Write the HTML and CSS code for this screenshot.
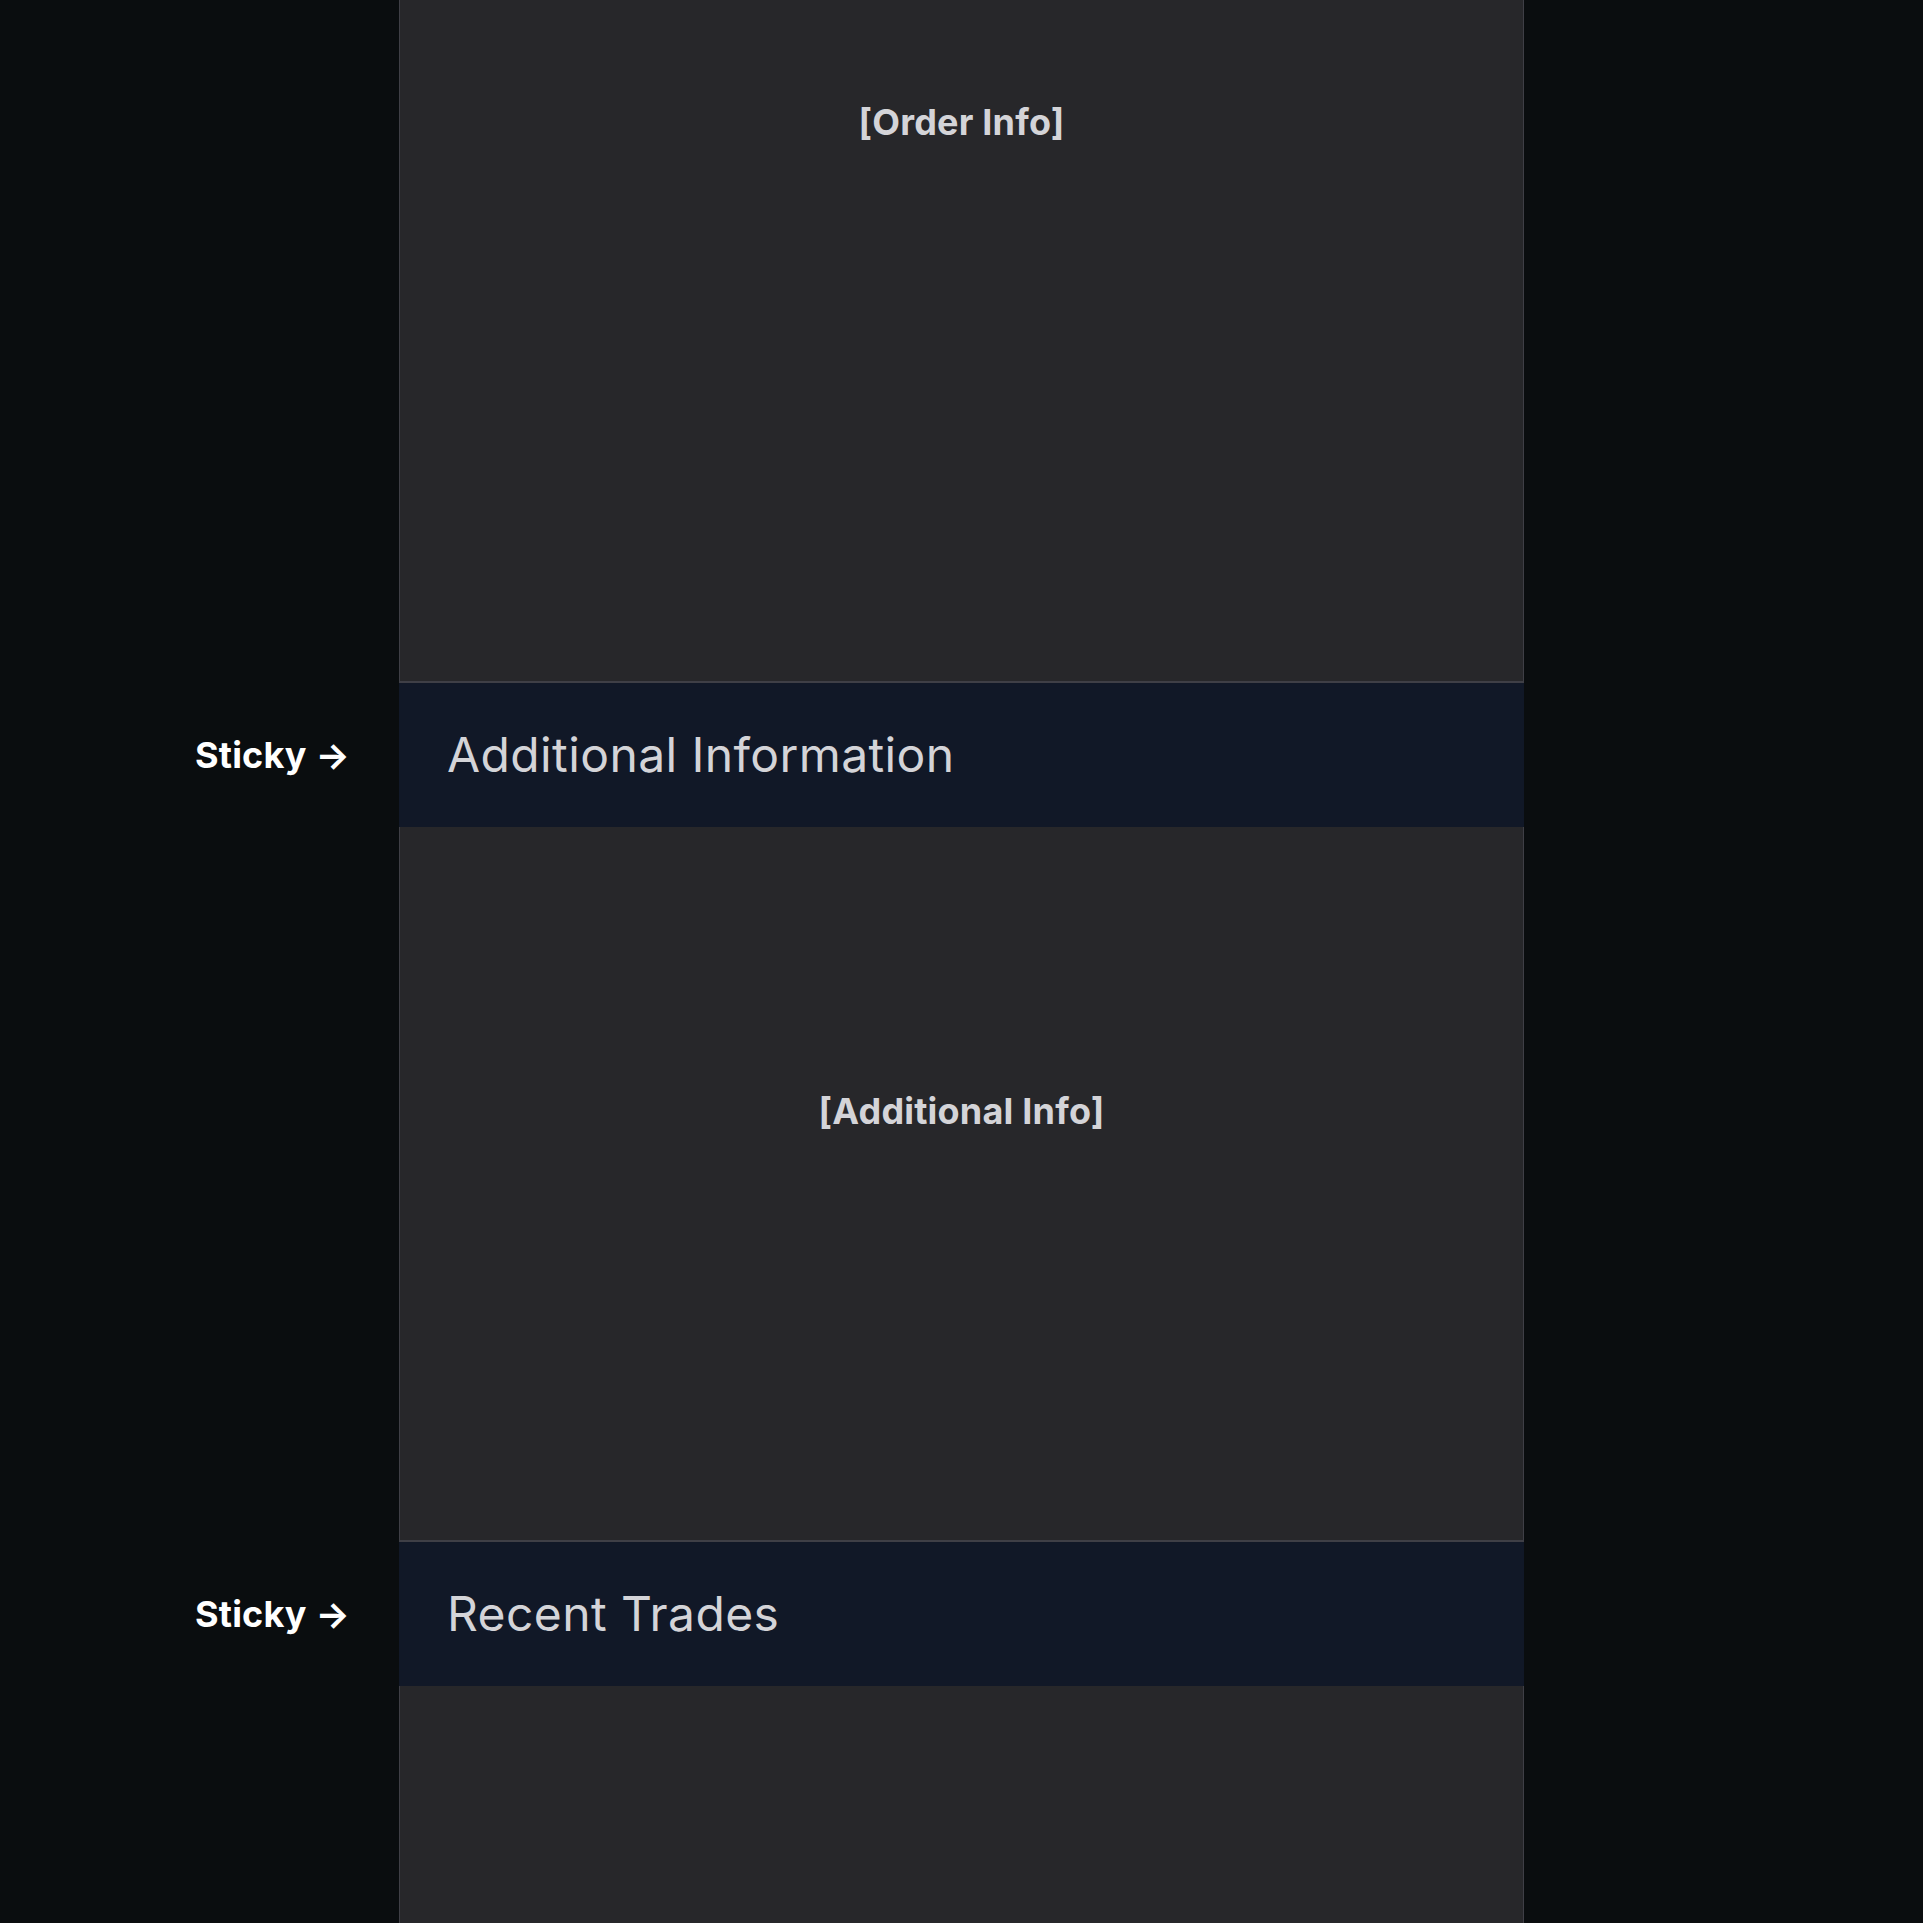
FILE: index.html
```html
<!DOCTYPE html>
<html lang="en">

<head>
    <meta charset="UTF-8">
    <meta name="viewport" content="width=device-width, initial-scale=1.0">
    <title>Sticky Sections</title>
    <link rel="stylesheet" href="styles.css">
</head>

<body>

    <div class="page">
        <div class="panel panel-first">
            <div class="placeholder">[Order Info]</div>
        </div>

        <div class="section-header">
            <span class="sticky-label">Sticky &rarr;</span>
            <h2>Additional Information</h2>
        </div>

        <div class="panel panel-middle">
            <div class="placeholder">[Additional Info]</div>
        </div>

        <div class="section-header">
            <span class="sticky-label">Sticky &rarr;</span>
            <h2>Recent Trades</h2>
        </div>

        <div class="panel panel-last"></div>
    </div>

</body>

</html>
```

FILE: styles.css
```css
body {
    font-family: 'Inter', 'Noto Sans', sans-serif;
    background-color: #0a0d0f;
    margin: 0;
    padding: 0;
    overflow: hidden;
}

.page {
    width: 1125px;
    margin: 0 auto;
}

.panel {
    background-color: #27272a;
    border: 1px solid #3f3f46;
    border-top: none;
    border-bottom-width: 2px;
    box-sizing: border-box;
}

.panel-first {
    height: 683px;
    padding-top: 102px;
}

.panel-middle {
    height: 715px;
    padding-top: 264px;
}

.panel-last {
    height: 400px;
    border-bottom: none;
}

.placeholder {
    text-align: center;
    font-size: 36px;
    line-height: 40px;
    font-weight: 700;
    letter-spacing: 0.2px;
    color: #d4d4d8;
}

.section-header {
    position: sticky;
    top: 0;
    background-color: #111827;
    padding: 48px;
}

.section-header h2 {
    margin: 0;
    font-size: 48px;
    line-height: 1;
    font-weight: 400;
    letter-spacing: 0.4px;
    color: #d4d4d8;
}

.sticky-label {
    position: absolute;
    right: 100%;
    top: 50%;
    transform: translateY(-50%);
    margin-right: 49px;
    white-space: nowrap;
    font-size: 36px;
    font-weight: 700;
    letter-spacing: 0.2px;
    color: #ffffff;
}
```
